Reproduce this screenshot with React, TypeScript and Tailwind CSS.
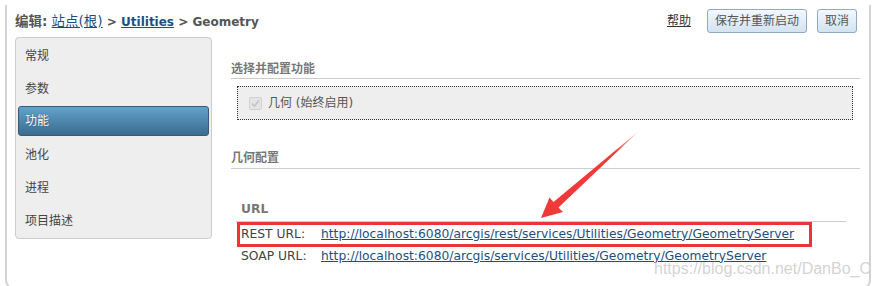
const font = "font-['DejaVu_Sans','Noto_Sans_CJK_SC',sans-serif]";

const navItems = ["常规", "参数", "功能", "池化", "进程", "项目描述"];

function Arrow() {
  return (
    <svg className="absolute left-0 top-0" width="878" height="286" viewBox="0 0 878 286">
      <defs>
        <linearGradient id="tail" x1="640" y1="130" x2="541" y2="218" gradientUnits="userSpaceOnUse">
          <stop offset="0" stopColor="#f03a3a" stopOpacity="0.15" />
          <stop offset="0.25" stopColor="#f03a3a" stopOpacity="1" />
          <stop offset="1" stopColor="#f03a3a" />
        </linearGradient>
      </defs>
      <polygon
        points="640,130 558.5,207.5 563,212 541,218 549.5,197.5 553.5,202 "
        fill="url(#tail)"
      />
    </svg>
  );
}

export default function App() {
  return (
    <div className={`relative w-[878px] h-[286px] overflow-hidden bg-white text-[12px] text-[#444] ${font}`}>
      <div className="ml-[5px] w-[866px] h-[285px] border-x-2 border-b-2 border-[#d4d4d4] rounded-b-[10px] pl-[8px] pr-[9px]">
        {/* header */}
        <div className="mt-[5px] h-[32px] flex items-center justify-between">
          <div className="text-[12px] font-bold text-[#555]">
            <span className="text-[13.5px]">编辑:</span>{" "}
            <a className="underline text-[#1d4f7e] font-normal text-[13.5px]">站点(根)</a> &gt;{" "}
            <a className="underline text-[#1d4f7e]">Utilities</a> &gt; Geometry
          </div>
          <div className="flex items-center mr-[3px]">
            <a className="underline text-[#333] mr-[16px]">帮助</a>
            <button className="h-[24px] px-[7px] rounded-[3px] border border-[#8fa9c6] bg-gradient-to-b from-[#f3f8fd] to-[#d3e3f2] text-[#555]">
              保存并重新启动
            </button>
            <button className="ml-[10px] h-[24px] px-[7px] rounded-[3px] border border-[#8fa9c6] bg-gradient-to-b from-[#f3f8fd] to-[#d3e3f2] text-[#555]">
              取消
            </button>
          </div>
        </div>

        {/* body */}
        <div className="flex">
          <div className="w-[197px] h-[202px] py-[1px] bg-[#eeeeee] border border-[#cccccc] rounded-[4px]">
            {navItems.map((item) =>
              item === "功能" ? (
                <div key={item} className="h-[33px] pt-[1px] pb-[2px] px-[2px]">
                  <div className="h-full flex items-center px-[6px] rounded-[3px] border border-[#375a78] bg-gradient-to-b from-[#62a2ca] to-[#3b6b90] text-white [text-shadow:0_0_1px_#1d3d58]">
                    {item}
                  </div>
                </div>
              ) : (
                <div key={item} className="h-[33px] flex items-center px-[9px]">
                  {item}
                </div>
              )
            )}
          </div>

          <div className="ml-[19px] flex-1">
            <div className="pt-[24px] pb-[1px] leading-[16px] border-b border-[#cccccc] font-bold text-[#777]">
              选择并配置功能
            </div>
            <div className="mt-[7px] mx-[6px] mr-[7px] h-[34px] bg-[#eeeeee] border border-dotted border-[#333] flex items-center pl-[11px]">
              <span className="w-[13px] h-[13px] rounded-[2px] border border-[#d2d2d2] bg-[#e4e4e4] flex items-center justify-center">
                <svg width="9" height="9" viewBox="0 0 9 9">
                  <path d="M1 4.5 L3.5 7 L8 1.5" fill="none" stroke="#c4c4c4" strokeWidth="1.6" />
                </svg>
              </span>
              <span className="ml-[6px] text-[#555]">几何 (始终启用)</span>
            </div>

            <div className="pt-[30px] pb-[2px] leading-[16px] border-b border-[#cccccc] font-bold text-[#777]">
              几何配置
            </div>

            <div className="ml-[5px] mr-[14px] text-[12.3px]">
              <div className="pt-[32px] pb-[4px] pl-[5px] leading-[16px] border-b border-[#cccccc] font-bold text-[#777]">
                URL
              </div>
              <div className="mt-[1px] h-[22px] flex items-center pl-[5px]">
                <span className="w-[80px]">REST URL:</span>
                <a className="underline text-[#1d4f7e]">
                  http://localhost:6080/arcgis/rest/services/Utilities/Geometry/GeometryServer
                </a>
              </div>
              <div className="h-[22px] flex items-center pl-[5px]">
                <span className="w-[80px]">SOAP URL:</span>
                <a className="underline text-[#1d4f7e]">
                  http://localhost:6080/arcgis/services/Utilities/Geometry/GeometryServer
                </a>
              </div>
            </div>
          </div>
        </div>
      </div>

      {/* annotations */}
      <div className="absolute left-[237px] top-[222px] w-[575px] h-[25px] border-[3px] border-[#ec3338]" />
      <Arrow />
      <div className="absolute left-[654px] top-[259px] text-[16px] leading-[20px] text-[#c8c8c8]/80 font-['Liberation_Sans',sans-serif] whitespace-nowrap">
        https://blog.csdn.net/DanBo_C
      </div>
    </div>
  );
}
